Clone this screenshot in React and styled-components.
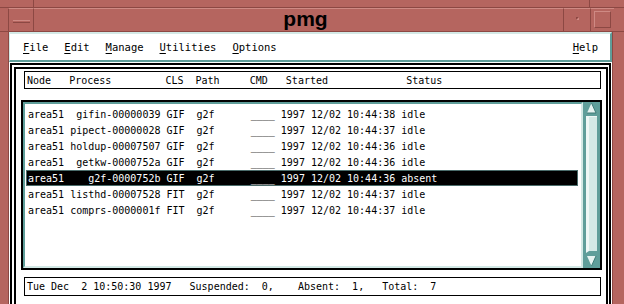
import React from "react";
import styled, { createGlobalStyle } from "styled-components";

const FRAME = "#b5655f";
const FRAME_DARK = "#8c4843";
const FRAME_LIGHT = "#cf8a84";
const TEAL = "#5f9e9a";
const TEAL_LIGHT = "#d3e9e6";
const MONO = `"DejaVu Sans Mono", "Liberation Mono", monospace`;

const GlobalStyle = createGlobalStyle`
  html, body {
    margin: 0;
    padding: 0;
    background: ${FRAME};
  }
  body {
    width: 624px;
    height: 304px;
    overflow: hidden;
  }
`;

const Window = styled.div`
  width: 624px;
  height: 304px;
  display: flex;
  flex-direction: column;
  overflow: hidden;
  background: ${FRAME};
  font-family: ${MONO};
  font-size: 10px;
  color: #000;
`;

const ResizeStrip = styled.div`
  height: 7px;
  flex-shrink: 0;
  display: flex;
  border-bottom: 1px solid ${FRAME_DARK};
`;

const Corner = styled.div`
  width: ${(p) => p.$w}px;
  border-right: ${(p) => (p.$right ? 0 : 1)}px solid ${FRAME_DARK};
  border-left: ${(p) => (p.$right ? 1 : 0)}px solid ${FRAME_DARK};
  box-sizing: border-box;
`;

const Spacer = styled.div`
  flex: 1;
`;

const TitleRow = styled.div`
  height: 23px;
  flex-shrink: 0;
  display: flex;
  border-bottom: 1px solid ${FRAME_DARK};
  padding-left: 8px;
  padding-right: 10px;
`;

const TitleButton = styled.div`
  width: ${(p) => p.$w}px;
  box-sizing: border-box;
  border-left: 1px solid ${FRAME_DARK};
  border-top: 1px solid ${FRAME_LIGHT};
  display: flex;
  align-items: center;
  justify-content: center;
`;

const Title = styled.div`
  flex: 1;
  border-left: 1px solid ${FRAME_DARK};
  border-top: 1px solid ${FRAME_LIGHT};
  display: flex;
  align-items: center;
  justify-content: center;
  font-family: "Liberation Sans", Arial, sans-serif;
  font-weight: bold;
  font-size: 21px;
  padding-left: 14px;
  padding-bottom: 2px;
`;

const MenuGlyph = styled.div`
  width: 17px;
  height: 3px;
  box-sizing: border-box;
  border-top: 1px solid ${FRAME_LIGHT};
  border-bottom: 1px solid ${FRAME_DARK};
  margin-top: 2px;
`;

const MinGlyph = styled.div`
  width: 3px;
  height: 3px;
  box-sizing: border-box;
  border: 1px solid ${FRAME_DARK};
  border-right-color: ${FRAME_LIGHT};
  border-bottom-color: ${FRAME_LIGHT};
  margin-top: -4px;
`;

const MaxGlyph = styled.div`
  width: 17px;
  height: 17px;
  box-sizing: border-box;
  border: 1px solid ${FRAME_LIGHT};
  border-right-color: ${FRAME_DARK};
  border-bottom-color: ${FRAME_DARK};
  margin-top: -1px;
`;

const Body = styled.div`
  flex: 1;
  display: flex;
  min-height: 0;
`;

const SideFrame = styled.div`
  width: ${(p) => p.$w}px;
  box-sizing: border-box;
  border-right: ${(p) => (p.$left ? 1 : 0)}px solid ${FRAME_DARK};
  border-left: ${(p) => (p.$left ? 0 : 1)}px solid ${FRAME_DARK};
`;

const Client = styled.div`
  width: 603px;
  background: #fff;
  display: flex;
  flex-direction: column;
  overflow: hidden;
`;

const MenuBar = styled.div`
  height: 30px;
  flex-shrink: 0;
  box-sizing: border-box;
  display: flex;
  align-items: center;
  padding: 0 4px 0 5px;
  border-top: 2px solid ${TEAL_LIGHT};
  border-left: 1px solid ${TEAL_LIGHT};
  border-bottom: 2px solid ${TEAL};
  border-right: 2px solid ${TEAL};
`;

const MenuItem = styled.div`
  padding: 0 8px;
  margin-left: ${(p) => (p.$push ? "auto" : "0")};
  white-space: pre;
  font-size: 10.5px;
`;

const Mnemonic = styled.span`
  text-decoration: underline;
  text-underline-offset: 2px;
`;

const OuterBox = styled.div`
  margin: 1px 1px 0 1px;
  height: 260px;
  flex-shrink: 0;
  border: 2px solid #000;
  padding: 2px 1px 0 2px;
`;

const InnerBox = styled.div`
  height: 260px;
  border: 2px solid #000;
  display: flex;
  flex-direction: column;
`;

const HeaderBox = styled.div`
  margin: 2px 5px 0 8px;
  height: 18px;
  flex-shrink: 0;
  box-sizing: border-box;
  border: 1px solid #000;
  padding-left: 2px;
  display: grid;
  grid-template-columns: 7ch 16ch 5ch 9ch 6ch 20ch 1fr;
  align-items: center;
  white-space: pre;
`;

const ListFrame = styled.div`
  margin: 11px 4px 0 5px;
  height: 170px;
  flex-shrink: 0;
  box-sizing: border-box;
  border: 2px solid #000;
  display: flex;
`;

const ListArea = styled.div`
  flex: 1;
  border-top: 2px solid ${TEAL};
  border-left: 2px solid ${TEAL};
  border-bottom: 2px solid ${TEAL_LIGHT};
  border-right: 2px solid ${TEAL_LIGHT};
  padding: 2px 3px 0 1px;
  background: #fff;
`;

const Row = styled.div`
  height: 16px;
  box-sizing: border-box;
  padding-left: 1px;
  border: 1px solid ${(p) => (p.$selected ? "#4a6c6a" : "transparent")};
  background: ${(p) => (p.$selected ? "#000" : "transparent")};
  color: ${(p) => (p.$selected ? "#fff" : "#000")};
  display: grid;
  grid-template-columns: 7ch 16ch 5ch 9ch 5ch 20ch 1fr;
  align-items: center;
  white-space: pre;
`;

const Process = styled.span`
  text-align: right;
  padding-right: 1ch;
`;

const ScrollBar = styled.div`
  width: 17px;
  box-sizing: border-box;
  background: ${TEAL};
  padding: 0 3px 1px 3px;
  display: flex;
  flex-direction: column;
`;

const Thumb = styled.div`
  flex: 1;
  margin: 1px 0 1px;
  background: ${TEAL_LIGHT};
  border-left: 3px solid #eef7f6;
  border-top: 1px solid #eef7f6;
  border-bottom: 2px solid ${TEAL};
`;

const Arrow = ({ up }) => (
  <svg width="11" height="13" viewBox="0 0 11 13" style={{ display: "block" }}>
    {up ? (
      <>
        <polygon points="5.5,1 10,11 1,11" fill="#e6f3f1" />
        <polyline points="1,11 10,11 5.5,1" fill="none" stroke="#3f7b77" strokeWidth="1" />
      </>
    ) : (
      <>
        <polygon points="1,2 10,2 5.5,12" fill="#e6f3f1" />
        <polyline points="5.5,12 10,2" fill="none" stroke="#3f7b77" strokeWidth="1" />
      </>
    )}
  </svg>
);

const StatusBox = styled.div`
  margin: 7px 5px 0 8px;
  height: 19px;
  flex-shrink: 0;
  box-sizing: border-box;
  border: 1px solid #000;
  padding-left: 2px;
  display: flex;
  align-items: center;
  white-space: pre;
`;

const rows = [
  { node: "area51", process: "gifin-00000039", cls: "GIF", time: "10:44:38", status: "idle" },
  { node: "area51", process: "pipect-00000028", cls: "GIF", time: "10:44:37", status: "idle" },
  { node: "area51", process: "holdup-00007507", cls: "GIF", time: "10:44:36", status: "idle" },
  { node: "area51", process: "getkw-0000752a", cls: "GIF", time: "10:44:36", status: "idle" },
  { node: "area51", process: "g2f-0000752b", cls: "GIF", time: "10:44:36", status: "absent", selected: true },
  { node: "area51", process: "listhd-00007528", cls: "FIT", time: "10:44:37", status: "idle" },
  { node: "area51", process: "comprs-0000001f", cls: "FIT", time: "10:44:37", status: "idle" },
];

const menus = [
  ["F", "ile"],
  ["E", "dit"],
  ["M", "anage"],
  ["U", "tilities"],
  ["O", "ptions"],
];

export default function App() {
  return (
    <>
      <GlobalStyle />
      <Window>
        <ResizeStrip>
          <Corner $w={34} />
          <Spacer />
          <Corner $w={35} $right />
        </ResizeStrip>
        <TitleRow>
          <TitleButton $w={25}>
            <MenuGlyph />
          </TitleButton>
          <Title>pmg</Title>
          <TitleButton $w={27}>
            <MinGlyph />
          </TitleButton>
          <TitleButton $w={24}>
            <MaxGlyph />
          </TitleButton>
        </TitleRow>
        <Body>
          <SideFrame $w={9} $left />
          <Client>
            <MenuBar>
              {menus.map(([m, rest]) => (
                <MenuItem key={m}>
                  <Mnemonic>{m}</Mnemonic>
                  {rest}
                </MenuItem>
              ))}
              <MenuItem $push>
                <Mnemonic>H</Mnemonic>elp
              </MenuItem>
            </MenuBar>
            <OuterBox>
              <InnerBox>
                <HeaderBox>
                  <span>Node</span>
                  <span>Process</span>
                  <span>CLS</span>
                  <span>Path</span>
                  <span>CMD</span>
                  <span>Started</span>
                  <span>Status</span>
                </HeaderBox>
                <ListFrame>
                  <ListArea>
                    {rows.map((r) => (
                      <Row key={r.process} $selected={r.selected}>
                        <span>{r.node}</span>
                        <Process>{r.process}</Process>
                        <span>{r.cls}</span>
                        <span>g2f</span>
                        <span>____</span>
                        <span>1997 12/02 {r.time}</span>
                        <span>{r.status}</span>
                      </Row>
                    ))}
                  </ListArea>
                  <ScrollBar>
                    <Arrow up />
                    <Thumb />
                    <Arrow />
                  </ScrollBar>
                </ListFrame>
                <StatusBox>
                  {"Tue Dec  2 10:50:30 1997   Suspended:  0,    Absent:  1,   Total:  7"}
                </StatusBox>
              </InnerBox>
            </OuterBox>
          </Client>
          <SideFrame $w={12} />
        </Body>
      </Window>
    </>
  );
}
